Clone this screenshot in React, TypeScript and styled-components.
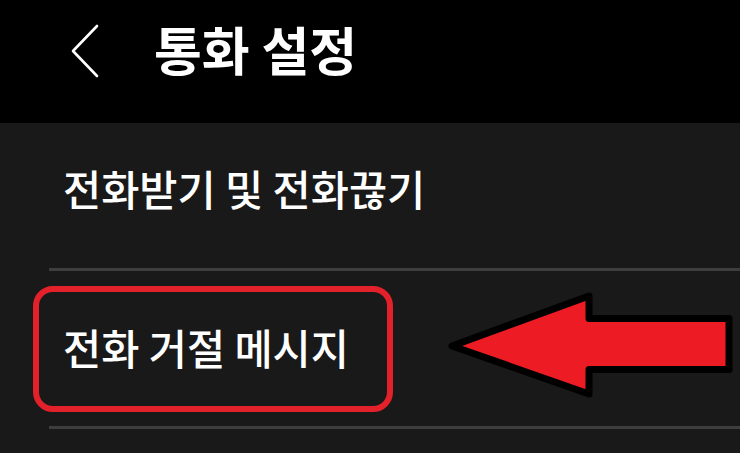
import React from 'react';
import styled, { createGlobalStyle } from 'styled-components';

const GlobalStyle = createGlobalStyle`
  html, body {
    margin: 0;
    padding: 0;
    background: #191919;
  }
  body {
    font-family: 'Noto Sans CJK KR', 'Noto Sans', sans-serif;
    color: #ffffff;
    overflow: hidden;
  }
`;

const Screen = styled.div`
  width: 740px;
  height: 453px;
  display: flex;
  flex-direction: column;
  background: #191919;
`;

const Header = styled.header`
  height: 123px;
  flex-shrink: 0;
  background: #000000;
  display: flex;
  align-items: center;
  padding-left: 70px;
  padding-bottom: 22px;
  box-sizing: border-box;
`;

const BackButton = styled.button`
  background: none;
  border: none;
  padding: 0;
  width: 32px;
  height: 54px;
  display: flex;
  align-items: center;
  cursor: pointer;
`;

const Title = styled.h1`
  margin: 0 0 4px 52px;
  font-size: 52px;
  font-weight: 700;
  line-height: 1;
`;

const List = styled.div`
  display: flex;
  flex-direction: column;
`;

const Row = styled.div<{ $height: number; $inset: number; $lift?: number }>`
  height: ${(p) => p.$height}px;
  box-sizing: border-box;
  display: flex;
  align-items: center;
  padding-left: ${(p) => p.$inset}px;
  padding-bottom: ${(p) => p.$lift ?? 0}px;
`;

const Label = styled.span`
  font-size: 41.5px;
  font-weight: 500;
  line-height: 1;
`;

const Divider = styled.div`
  height: 3px;
  margin-left: 49px;
  background: #3e3e3e;
`;

const Highlight = styled.div`
  width: 360px;
  height: 126px;
  box-sizing: border-box;
  border: 6px solid #e3212b;
  border-radius: 20px;
  display: flex;
  align-items: center;
  padding-left: 24px;
  padding-bottom: 2px;
`;

const Pointer = styled.svg`
  margin-left: 47px;
  flex-shrink: 0;
`;

const Chevron = () => (
  <svg width="32" height="54" viewBox="0 0 32 54">
    <polyline
      points="27,2 3,27 27,52"
      fill="none"
      stroke="#ffffff"
      strokeWidth="2.6"
      strokeLinecap="round"
      strokeLinejoin="round"
    />
  </svg>
);

const Arrow = () => (
  <Pointer width="300" height="155" viewBox="0 0 300 155">
    <polygon
      points="12,75 149,25 149,47.5 289,47.5 289,98.5 149,98.5 149,123"
      fill="#ed1c24"
      stroke="#000000"
      strokeWidth="7"
      strokeLinejoin="round"
    />
  </Pointer>
);

export default function App() {
  return (
    <>
      <GlobalStyle />
      <Screen>
        <Header>
          <BackButton aria-label="뒤로">
            <Chevron />
          </BackButton>
          <Title>통화 설정</Title>
        </Header>
        <List>
          <Row $height={145} $inset={63} $lift={13}>
            <Label>전화받기 및 전화끊기</Label>
          </Row>
          <Divider />
          <Row $height={155} $inset={33}>
            <Highlight>
              <Label>전화 거절 메시지</Label>
            </Highlight>
            <Arrow />
          </Row>
          <Divider />
        </List>
      </Screen>
    </>
  );
}
